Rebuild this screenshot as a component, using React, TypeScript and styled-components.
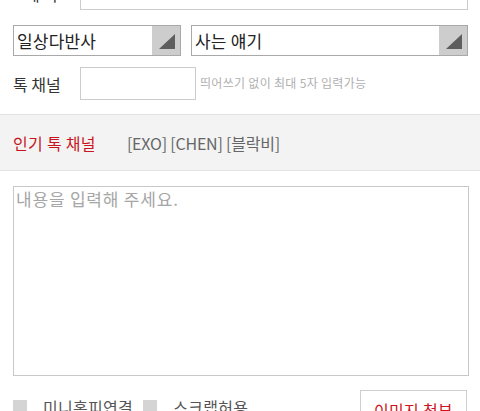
import React from "react";
import styled, { createGlobalStyle } from "styled-components";

const GlobalStyle = createGlobalStyle`
  html, body {
    margin: 0;
    padding: 0;
    background: #fff;
    overflow: hidden;
  }
  body {
    font-family: "Noto Sans CJK KR", "Noto Sans", "Liberation Sans", sans-serif;
    color: #333;
  }
`;

const Page = styled.div`
  width: 480px;
  height: 411px;
  overflow: hidden;
`;

const FormArea = styled.div`
  padding: 0 12px 0 13px;
`;

const Row = styled.div<{ $top: number }>`
  display: flex;
  align-items: center;
  margin-top: ${(p) => p.$top}px;
`;

const Label = styled.span<{ $indent?: number }>`
  width: 67px;
  box-sizing: border-box;
  padding-left: ${(p) => p.$indent ?? 0}px;
  flex-shrink: 0;
  font-size: 16px;
  letter-spacing: 0;
  color: #333;
  line-height: 1;
`;

const TextInput = styled.div<{ $width?: number }>`
  box-sizing: border-box;
  height: 33px;
  width: ${(p) => (p.$width ? `${p.$width}px` : "auto")};
  flex: ${(p) => (p.$width ? "none" : "1")};
  border: 1px solid #ccc;
  background: #fff;
`;

const Hint = styled.span`
  margin-left: 4px;
  font-size: 12px;
  letter-spacing: 0.3px;
  color: #b0b0b0;
  margin-top: -2px;
`;

const SelectRow = styled.div`
  display: flex;
  gap: 10px;
  margin-top: 15px;
`;

const SelectBox = styled.div<{ $width?: number }>`
  box-sizing: border-box;
  display: flex;
  align-items: stretch;
  height: 31px;
  width: ${(p) => (p.$width ? `${p.$width}px` : "auto")};
  flex: ${(p) => (p.$width ? "none" : "1")};
  border: 1px solid #a9a9a9;
  background: #fff;
`;

const SelectText = styled.span`
  flex: 1;
  padding-left: 3px;
  font-size: 17px;
  line-height: 29px;
  letter-spacing: 0.2px;
  color: #222;
`;

const Arrow = styled.span`
  position: relative;
  width: 28px;
  background: #cdcdcd;
  &::after {
    content: "";
    position: absolute;
    right: 5px;
    bottom: 6px;
    width: 0;
    height: 0;
    border-style: solid;
    border-width: 0 0 15px 16px;
    border-color: transparent transparent #5e5e5e transparent;
  }
`;

const Band = styled.div`
  display: flex;
  align-items: center;
  gap: 31px;
  margin-top: 14px;
  height: 55px;
  padding: 0 13px;
  background: #f3f3f3;
  border-top: 1px solid #e2e2e2;
  border-bottom: 1px solid #e2e2e2;
  font-size: 16px;
`;

const BandTitle = styled.span`
  color: #c8151d;
  letter-spacing: 0.3px;
`;

const BandTags = styled.span`
  color: #666;
  letter-spacing: -0.2px;
`;

const Content = styled.div`
  padding: 0 11px 0 13px;
`;

const TextArea = styled.div`
  box-sizing: border-box;
  margin-top: 15px;
  height: 190px;
  border: 1px solid #c8c8c8;
  padding: 0 2px;
  font-size: 17px;
  letter-spacing: 0.8px;
  line-height: 24px;
  color: #a6a6a6;
`;

const Footer = styled.div`
  display: flex;
  align-items: flex-start;
  margin-top: 14px;
`;

const Check = styled.label`
  display: flex;
  align-items: center;
  margin-top: 5px;
  font-size: 16px;
  letter-spacing: 0.3px;
  color: #555;
  & + & {
    margin-left: 10px;
  }
`;

const CheckSquare = styled.span`
  width: 14px;
  height: 14px;
  background: #d4d4d4;
  margin-right: 16px;
`;

const AttachButton = styled.button`
  margin-left: auto;
  margin-right: 2px;
  box-sizing: border-box;
  width: 107px;
  height: 36px;
  border: 1px solid #cfcfcf;
  background: #fff;
  padding: 4px 0 0;
  font-family: inherit;
  font-size: 16px;
  letter-spacing: 0.3px;
  color: #d0121b;
`;

export default function App() {
  return (
    <Page>
      <GlobalStyle />
      <FormArea>
        <Row $top={-23}>
          <Label $indent={12}>제 목</Label>
          <TextInput />
        </Row>
        <SelectRow>
          <SelectBox $width={168}>
            <SelectText>일상다반사</SelectText>
            <Arrow />
          </SelectBox>
          <SelectBox>
            <SelectText>사는 얘기</SelectText>
            <Arrow />
          </SelectBox>
        </SelectRow>
        <Row $top={11}>
          <Label>톡 채널</Label>
          <TextInput $width={116} />
          <Hint>띄어쓰기 없이 최대 5자 입력가능</Hint>
        </Row>
      </FormArea>
      <Band>
        <BandTitle>인기 톡 채널</BandTitle>
        <BandTags>[EXO] [CHEN] [블락비]</BandTags>
      </Band>
      <Content>
        <TextArea>내용을 입력해 주세요.</TextArea>
        <Footer>
          <Check>
            <CheckSquare />
            미니홈피연결
          </Check>
          <Check>
            <CheckSquare />
            스크랩허용
          </Check>
          <AttachButton>이미지 첨부</AttachButton>
        </Footer>
      </Content>
    </Page>
  );
}
